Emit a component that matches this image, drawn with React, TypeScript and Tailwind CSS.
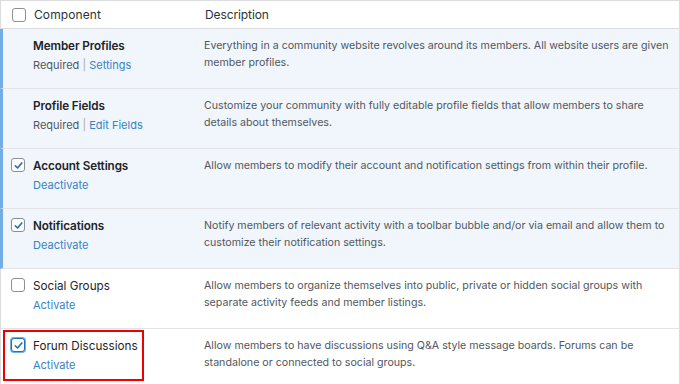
import React from "react";

type Row = {
  title: string;
  active: boolean;
  checkbox: "none" | "checked" | "empty" | "focused";
  required?: boolean;
  link: string;
  desc: string;
  highlight?: boolean;
};

const rows: Row[] = [
  {
    title: "Member Profiles",
    active: true,
    checkbox: "none",
    required: true,
    link: "Settings",
    desc: "Everything in a community website revolves around its members. All website users are given member profiles.",
  },
  {
    title: "Profile Fields",
    active: true,
    checkbox: "none",
    required: true,
    link: "Edit Fields",
    desc: "Customize your community with fully editable profile fields that allow members to share details about themselves.",
  },
  {
    title: "Account Settings",
    active: true,
    checkbox: "checked",
    link: "Deactivate",
    desc: "Allow members to modify their account and notification settings from within their profile.",
  },
  {
    title: "Notifications",
    active: true,
    checkbox: "checked",
    link: "Deactivate",
    desc: "Notify members of relevant activity with a toolbar bubble and/or via email and allow them to customize their notification settings.",
  },
  {
    title: "Social Groups",
    active: false,
    checkbox: "empty",
    link: "Activate",
    desc: "Allow members to organize themselves into public, private or hidden social groups with separate activity feeds and member listings.",
  },
  {
    title: "Forum Discussions",
    active: false,
    checkbox: "focused",
    link: "Activate",
    desc: "Allow members to have discussions using Q&A style message boards. Forums can be standalone or connected to social groups.",
    highlight: true,
  },
];

const Box = ({ kind }: { kind: Row["checkbox"] }) => {
  if (kind === "none") return <span className="w-[14px] h-[14px]" />;
  const checked = kind !== "empty";
  return (
    <span
      className={
        "w-[14px] h-[14px] rounded-[3px] bg-white flex items-center justify-center " +
        (kind === "focused"
          ? "border-[1.5px] border-[#2271b1] shadow-[0_0_0_1px_#72aee6]"
          : "border border-[#8c8f94]")
      }
    >
      {checked && (
        <svg width="11" height="11" viewBox="0 0 12 12" fill="none">
          <path d="M2.5 6.3 L5 8.7 L9.6 3.2" stroke="#2271b1" strokeWidth="1.8" strokeLinecap="round" strokeLinejoin="round" />
        </svg>
      )}
    </span>
  );
};

const App = () => {
  return (
    <div className="w-[680px] h-[384px] overflow-hidden bg-white font-['Inter',sans-serif]">
      <div className="border-t border-r border-[#dcdcde]">
        <div className="h-[28px] flex items-center border-b border-[#dcdcde] border-l text-[12px] text-[#2c3338]">
          <div className="w-[33px] pl-[11px] pt-[1px] flex">
            <Box kind="empty" />
          </div>
          <div className="w-[171px] tracking-[0.1px]">Component</div>
          <div className="tracking-[-0.1px]">Description</div>
        </div>
        {rows.map((r) => (
          <div
            key={r.title}
            className={
              "h-[60px] flex border-b border-[#e4e4e6] " +
              (r.active ? "bg-[#f0f6fc] border-l-[3px] border-l-[#72aee6]" : "bg-white border-l border-l-[#dcdcde]")
            }
          >
            <div className={"pt-[9px] flex " + (r.active ? "w-[30px] pl-[8px]" : "w-[32px] pl-[10px]")}>
              <div className="relative">
                {r.highlight && (
                  <div className="absolute left-[-8px] top-[-8px] w-[141px] h-[51px] border-[2.5px] border-[#ee0000]" />
                )}
                <Box kind={r.checkbox} />
              </div>
            </div>
            <div className="w-[171px] pt-[8px]">
              <div
                className={
                  "text-[11.7px] leading-[18px] text-[#1d2327] " + (r.active ? "font-semibold tracking-[-0.1px]" : "")
                }
              >
                {r.title}
              </div>
              <div className="text-[11px] leading-[20px] text-[#50575e]">
                {r.required && (
                  <>
                    Required <span className="text-[#a7aaad]">|</span>{" "}
                  </>
                )}
                <span className="text-[#3582c4]">{r.link}</span>
              </div>
            </div>
            <div className="flex-1 pt-[8px] pr-[4px] text-[10.65px] leading-[17px] text-[#50575e]">{r.desc}</div>
          </div>
        ))}
      </div>
    </div>
  );
};

export default App;
